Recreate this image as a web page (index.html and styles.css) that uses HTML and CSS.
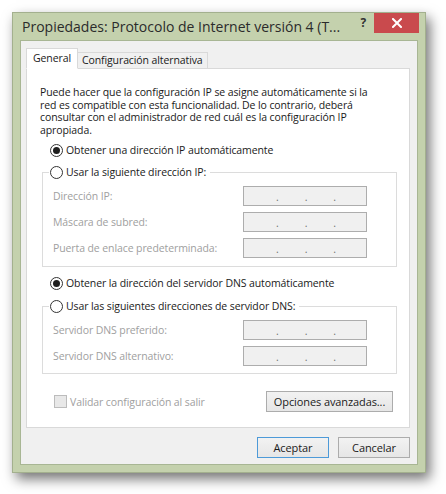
FILE: index.html
```html
<!DOCTYPE html>
<html lang="es">
<head>
<meta charset="utf-8">
<title>Propiedades: Protocolo de Internet versión 4</title>
<link rel="stylesheet" href="styles.css">
</head>
<body>
<div class="stage">
  <div class="window">
    <div class="titlebar">
      <span class="title">Propiedades: Protocolo de Internet versión 4 (T...</span>
      <span class="help">?</span>
      <span class="close"><svg width="10" height="10" viewBox="0 0 10 10"><path d="M1 1 L9 9 M9 1 L1 9" stroke="#fff" stroke-width="2" stroke-linecap="square"/></svg></span>
    </div>
    <div class="client">
      <div class="tabs">
        <div class="tab active">General</div>
        <div class="tab">Configuración alternativa</div>
      </div>
      <div class="panel">
        <p class="intro">Puede hacer que la configuración IP se asigne automáticamente si la red es compatible con esta funcionalidad. De lo contrario, deberá consultar con el administrador de red cuál es la configuración IP apropiada.</p>
        <div class="radio-row first"><span class="radio checked"></span><span>Obtener una dirección IP automáticamente</span></div>
        <fieldset class="group">
          <legend class="radio-row"><span class="radio"></span><span>Usar la siguiente dirección IP:</span></legend>
          <div class="field-row"><span class="label">Dirección IP:</span><span class="ipbox"><i>.</i><i>.</i><i>.</i></span></div>
          <div class="field-row"><span class="label">Máscara de subred:</span><span class="ipbox"><i>.</i><i>.</i><i>.</i></span></div>
          <div class="field-row"><span class="label">Puerta de enlace predeterminada:</span><span class="ipbox"><i>.</i><i>.</i><i>.</i></span></div>
        </fieldset>
        <div class="radio-row dns"><span class="radio checked"></span><span>Obtener la dirección del servidor DNS automáticamente</span></div>
        <fieldset class="group dnsgroup">
          <legend class="radio-row"><span class="radio"></span><span>Usar las siguientes direcciones de servidor DNS:</span></legend>
          <div class="field-row"><span class="label">Servidor DNS preferido:</span><span class="ipbox"><i>.</i><i>.</i><i>.</i></span></div>
          <div class="field-row"><span class="label">Servidor DNS alternativo:</span><span class="ipbox"><i>.</i><i>.</i><i>.</i></span></div>
        </fieldset>
        <div class="bottom-row">
          <div class="check-row"><span class="checkbox"></span><span class="label">Validar configuración al salir</span></div>
          <button class="btn adv">Opciones avanzadas...</button>
        </div>
      </div>
      <div class="footer">
        <button class="btn default">Aceptar</button>
        <button class="btn">Cancelar</button>
      </div>
    </div>
  </div>
</div>
</body>
</html>
```
FILE: styles.css
```css
* { box-sizing: border-box; }
html, body { margin: 0; padding: 0; background: #ffffff; }
body {
  font-family: "Open Sans", "Noto Sans", sans-serif;
  font-size: 10.5px;
  letter-spacing: -0.1px;
  color: #1a1a1a;
}
.stage { padding: 12px 0 0 12px; width: 446px; height: 494px; }
.window {
  width: 414px;
  height: 461px;
  background: #c4d1ad;
  border: 1px solid #a3b08e;
  padding: 0 7px 7px 7px;
  box-shadow: 4px 6px 12px rgba(0,0,0,0.55);
  display: flex;
  flex-direction: column;
}
.titlebar {
  height: 29px;
  display: flex;
  align-items: flex-start;
  margin-right: -1px;
}
.title {
  font-size: 14px;
  letter-spacing: 0;
  line-height: 20px;
  margin: 4px 0 0 2px;
  color: #2b2b2b;
  white-space: nowrap;
  flex: 1;
}
.help {
  font-size: 12px;
  font-weight: bold;
  color: #333;
  margin: 2px 8px 0 0;
  line-height: 16px;
}
.close {
  width: 45px;
  height: 20px;
  background: #c94a4d;
  display: flex;
  align-items: center;
  justify-content: center;
}
.client {
  flex: 1;
  background: #f0f0f0;
  border: 1px solid #a8b694;
  padding: 7px 7px 6px 5px;
  display: flex;
  flex-direction: column;
}
.tabs {
  display: flex;
  align-items: flex-end;
  position: relative;
  z-index: 1;
  margin-bottom: -1px;
}
.tab {
  height: 17px;
  line-height: 15px;
  padding: 0 4px;
  border: 1px solid #d9d9d9;
  background: #f0f0f0;
  white-space: nowrap;
}
.tab + .tab { border-left: none; }
.tab.active {
  height: 21px;
  line-height: 18px;
  background: #ffffff;
  border-bottom: 1px solid #ffffff;
  padding: 0 6px;
}
.panel {
  height: 360px;
  background: #ffffff;
  border: 1px solid #d9d9d9;
  padding: 17px 12px 0 13px;
}
.intro {
  margin: 0;
  max-width: 336px;
  line-height: 12.5px;
  color: #1a1a1a;
}
.radio-row {
  display: flex;
  align-items: center;
  height: 16px;
  gap: 3px;
  white-space: nowrap;
}
.radio-row.first { margin: 6px 0 0 10px; }
.radio-row.dns { margin: 8px 0 0 10px; }
.radio {
  width: 13px;
  height: 13px;
  border-radius: 50%;
  border: 1px solid #333333;
  background: #ffffff;
  display: flex;
  align-items: center;
  justify-content: center;
}
.radio.checked::after {
  content: "";
  width: 7px;
  height: 7px;
  border-radius: 50%;
  background: #1f1f1f;
}
.group {
  margin: 6px 0 0 2px;
  border: 1px solid #dcdcdc;
  padding: 6px 29px 8px 10px;
  min-width: 0;
}
.group legend {
  padding: 0 4px 0 1px;
  margin-left: -4px;
}
.dnsgroup { margin-top: 7px; padding-top: 6px; padding-bottom: 7px; }
.field-row {
  display: flex;
  align-items: center;
  justify-content: space-between;
  height: 20px;
}
.field-row + .field-row { margin-top: 6px; }
.label { color: #a0a0a0; }
.ipbox {
  width: 124px;
  height: 20px;
  background: #f0f0f0;
  border: 1px solid #adadad;
  display: flex;
  justify-content: center;
  gap: 26px;
  padding-left: 2px;
  color: #707070;
  line-height: 20px;
}
.ipbox i { font-style: normal; }
.bottom-row {
  display: flex;
  align-items: center;
  justify-content: space-between;
  margin-top: 17px;
  padding-right: 4px;
}
.check-row {
  display: flex;
  align-items: center;
  gap: 3px;
  margin-left: 14px;
}
.checkbox {
  width: 13px;
  height: 13px;
  border: 1px solid #bcbcbc;
  background: #e8e8e8;
}
.btn {
  font-family: inherit;
  font-size: 11px;
  letter-spacing: -0.1px;
  color: #1a1a1a;
  height: 21px;
  padding: 0;
  border: 1px solid #acacac;
  background: linear-gradient(#f2f2f2, #e6e6e6);
  border-radius: 0;
}
.btn.adv { width: 127px; }
.footer {
  display: flex;
  justify-content: flex-end;
  gap: 9px;
  margin-top: 9px;
}
.footer .btn { width: 72px; }
.btn.default { border-color: #4d9ad8; }
```
